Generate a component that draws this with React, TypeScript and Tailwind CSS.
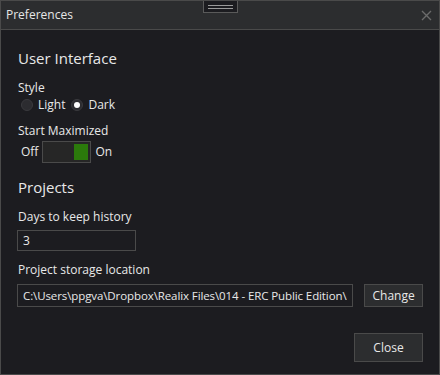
import { useState } from 'react'

const font = { fontFamily: '"Segoe UI", "Open Sans", "Noto Sans", sans-serif' }

export default function App() {
  const [theme, setTheme] = useState<'light' | 'dark'>('dark')
  const [maximized, setMaximized] = useState(true)

  return (
    <div
      className="relative w-[440px] h-[375px] bg-[#1c1c20] border border-[#4a4a4a] text-[#e8e8e8] flex flex-col overflow-hidden"
      style={font}
    >
      {/* grip */}
      <div className="absolute left-[202px] top-[-1px] w-[35px] h-[13px] border border-[#5a5a5a] bg-[#1c1c20] flex flex-col items-center justify-center gap-[2px]">
        <div className="w-[25px] h-px bg-[#9a9a9a]" />
        <div className="w-[25px] h-px bg-[#9a9a9a]" />
      </div>

      <div className="h-[29px] shrink-0 bg-[#2c2d2f] border-b border-[#4a4a4a] flex items-center justify-between pl-[5px] pr-[7px]">
        <span className="text-[12px] text-[#e6e6e6]">Preferences</span>
        <svg width="11" height="11" viewBox="0 0 11 11" className="mt-[1px]">
          <path d="M1 1 L10 10 M10 1 L1 10" stroke="#6b6b6b" strokeWidth="1.4" />
        </svg>
      </div>

      <div className="flex-1 flex flex-col pl-[17px] pr-[16px]">
        <h2 className="text-[15px] mt-[17px] leading-[22px]">User Interface</h2>

        <div className="text-[12px] mt-[11px] leading-[16px]">Style</div>
        <div className="flex items-center ml-[3px] text-[12px] gap-[4px]">
          <button onClick={() => setTheme('light')} className="flex items-center gap-[5px]">
            <span className="w-[12px] h-[12px] rounded-full bg-[#2c2c30] border border-[#3a3a3e] flex items-center justify-center">
              {theme === 'light' && <span className="w-[6px] h-[6px] rounded-full bg-white" />}
            </span>
            Light
          </button>
          <button onClick={() => setTheme('dark')} className="flex items-center gap-[5px] ml-[2px]">
            <span className="w-[12px] h-[12px] rounded-full bg-[#2c2c30] border border-[#3a3a3e] flex items-center justify-center">
              {theme === 'dark' && <span className="w-[6px] h-[6px] rounded-full bg-white" />}
            </span>
            Dark
          </button>
        </div>

        <div className="text-[12px] mt-[9px] leading-[16px]">Start Maximized</div>
        <div className="flex items-center mt-[2px] ml-[3px] text-[12px] gap-[4px]">
          <span>Off</span>
          <button
            onClick={() => setMaximized(!maximized)}
            className={`w-[49px] h-[22px] border border-[#4a4a4a] bg-[#262626] flex items-center px-[2px] ${maximized ? 'justify-end' : 'justify-start'}`}
          >
            <span className={`w-[14px] h-[16px] ${maximized ? 'bg-[#2b7a0b]' : 'bg-[#666]'}`} />
          </button>
          <span>On</span>
        </div>

        <h2 className="text-[15px] mt-[13px] leading-[22px]">Projects</h2>

        <div className="text-[12px] mt-[11px] leading-[16px]">Days to keep history</div>
        <input
          defaultValue="3"
          className="mt-[5px] ml-[-1px] w-[119px] h-[21px] bg-[#1c1c20] border border-[#4a4a4a] text-[12px] px-[5px] outline-none text-[#e8e8e8]"
        />

        <div className="text-[12px] mt-[11px] leading-[16px]">Project storage location</div>
        <div className="flex items-center gap-[11px] mt-[6px] ml-[-1px]">
          <input
            defaultValue="C:\Users\ppgva\Dropbox\Realix Files\014 - ERC Public Edition\ERC Demo"
            className="w-[337px] h-[23px] bg-[#1c1c20] border border-[#4a4a4a] text-[11.5px] tracking-[-0.1px] px-[5px] outline-none text-[#e8e8e8]"
          />
          <button className="w-[59px] h-[23px] bg-[#2c2d2f] border border-[#4a4a4a] text-[12px]">Change</button>
        </div>

        <div className="flex justify-end mt-[26px]">
          <button className="w-[69px] h-[29px] bg-[#2c2d2f] border border-[#4a4a4a] text-[12px]">Close</button>
        </div>
      </div>
    </div>
  )
}
